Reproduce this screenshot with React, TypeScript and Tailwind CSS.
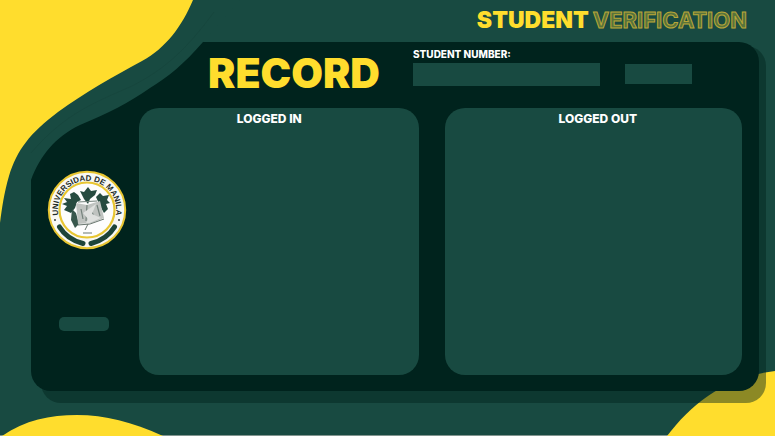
import type { ReactNode } from "react";

function TopWave() {
  return (
    <svg className="pointer-events-none absolute left-0 top-0 h-[240px] w-[240px]" viewBox="0 0 240 240" aria-hidden="true">
      <path d="M0 0H240L203 42C184 64 168 77 150 88C128 103 109 113 80 125C55 137 40 156 31 180V240H0Z" fill="#184A41" />
      <path d="M193 0C182 26 166 48 142 61C114 76 84 93 58 112C30 133 17 150 9 176C4 193 2 208 0 223V0Z" fill="#FFDD2D" />
      <path d="M214 12C186 50 165 69 132 86C96 102 65 113 31 153" fill="none" stroke="#15433B" strokeWidth="0.6" />
    </svg>
  );
}

function BottomBlobs() {
  return (
    <>
      <svg className="pointer-events-none absolute bottom-0 left-0 h-6 w-[170px]" viewBox="0 0 170 24" aria-hidden="true">
        <path d="M2 24C25 8 50 3 77 3C105 3 132 10 163 24Z" fill="#FFDD2D" />
      </svg>
      <svg className="pointer-events-none absolute bottom-0 right-0 h-[70px] w-[115px]" viewBox="0 0 115 70" aria-hidden="true">
        <path d="M7 70C32 37 66 11 115 5V70Z" fill="#FFDD2D" />
      </svg>
    </>
  );
}

function Seal() {
  return (
    <svg className="h-20 w-20" viewBox="0 0 80 80" role="img" aria-label="Universidad de Manila">
      <defs>
        <path id="seal-arc" d="M13.4 52A29.2 29.2 0 1 1 66.6 52" />
      </defs>
      <circle cx="40" cy="40" r="38.2" fill="#F8F8F4" stroke="#E8C632" strokeWidth="2" />
      <circle cx="40" cy="40" r="27.5" fill="#FDFDFD" stroke="#E8C632" strokeWidth="2.2" />
      <text className="font-['Liberation_Sans'] text-[8px] font-bold" fill="#222B28" textAnchor="middle">
        <textPath href="#seal-arc" startOffset="50%">UNIVERSIDAD DE MANILA</textPath>
      </text>
      <path d="M12.5 57C18 66 26 71 36 73.5" fill="none" stroke="#1D4439" strokeWidth="5" strokeLinecap="round" />
      <path d="M67.5 57C62 66 54 71 44 73.5" fill="none" stroke="#1D4439" strokeWidth="5" strokeLinecap="round" />
      <circle cx="8" cy="50" r="0.9" fill="#222B28" />
      <circle cx="72" cy="50" r="0.9" fill="#222B28" />
      <path d="M33 21L37 22L41 17L44 21L50 20L48 25L43 29L41 34L37 29Z" fill="#264B40" />
      <path d="M23 24L27 22L31 25L34 30L30 32L28 38L24 43L17 40L20 36L15 34L20 32L17 28L24 29Z" fill="#264B40" />
      <path d="M49 27L53 23L56 26L62 25L60 30L63 33L59 34L61 39L57 43L53 36Z" fill="#264B40" />
      <path d="M25 39L29 43L32 54L28 58L24 50Z" fill="#38574D" />
      <path d="M29 33L40 35L53 31L57 48L45 53L31 54Z" fill="#BFC3C0" />
      <path d="M40 35L39 51M34 39L36 49M44 38L47 48M50 35L53 46M31 32L50 31" fill="none" stroke="#72807A" strokeWidth="1.2" />
      <path d="M36 43L49 34L45 44L54 48L38 55L41 49Z" fill="#DFE1DF" />
      <path d="M31 55L43 54L57 49M41 54L38 60" fill="none" stroke="#69766F" strokeWidth="1" />
      <path d="M36 63H45" stroke="#A0A9A4" strokeWidth="1.6" />
    </svg>
  );
}

function Panel({ title, children }: { title: string; children?: ReactNode }) {
  return (
    <section className="h-[267px] rounded-[20px] bg-[#184A41] pt-1 text-center" aria-label={title}>
      {children}
    </section>
  );
}

export default function App() {
  return (
    <main className="relative isolate min-h-screen overflow-hidden bg-[#184A41] pb-11 pl-[31px] pr-4 font-['Inter',sans-serif] font-black text-white">
      <div className="pointer-events-none absolute inset-x-0 bottom-0 border-b border-[#82958F]" />
      <BottomBlobs />
      <header className="relative flex h-[42px] justify-end pr-3 pt-2">
        <h1 className="flex gap-1 text-[23px] leading-6 text-[#FFDD2D]">
          <span>STUDENT</span>
          <span className="text-[22px] font-bold text-[#FFDD2D]/30 [-webkit-text-stroke:1px_#B8A638]">VERIFICATION</span>
        </h1>
      </header>
      <div className="relative">
        <div className="absolute -bottom-3 -right-[7px] left-[10px] top-1 rounded-[20px] bg-[#00231D]/45" />
        <div className="relative grid grid-cols-[108px_1fr] rounded-[20px] bg-[#00231D] pb-4 pr-[17px]">
          <div className="col-start-2 flex h-[66px]">
            <h2 className="w-[274px] pl-[69px] pt-[11px] text-[41px] leading-10 text-[#FFDD2D]">RECORD</h2>
            <form className="flex gap-[25px]" onSubmit={(event) => event.preventDefault()}>
              <div className="pt-1.5">
                <label htmlFor="student-number" className="block h-[15px] text-[10px] leading-3 font-extrabold">STUDENT NUMBER:</label>
                <input id="student-number" type="text" className="block h-[23px] w-[187px] bg-[#184A41] px-2 text-xs outline-none focus:ring-1 focus:ring-[#FFDD2D]" />
              </div>
              <button type="submit" aria-label="Submit" className="mt-[22px] h-5 w-[67px] bg-[#184A41]" />
            </form>
          </div>
          <aside className="pl-4 pt-[62px]">
            <Seal />
            <button type="button" aria-label="Back" className="ml-3 mt-[67px] block h-3.5 w-[50px] rounded-[5px] bg-[#184A41]" />
          </aside>
          <div className="grid grid-cols-[280fr_296fr] gap-[26px]">
            <Panel title="Logged in">
              <h3 className="pr-5 text-[12px] leading-[14px] font-extrabold">LOGGED IN</h3>
            </Panel>
            <Panel title="Logged out">
              <h3 className="pl-2 text-[12px] leading-[14px] font-extrabold">LOGGED OUT</h3>
            </Panel>
          </div>
        </div>
      </div>
      <TopWave />
    </main>
  );
}
